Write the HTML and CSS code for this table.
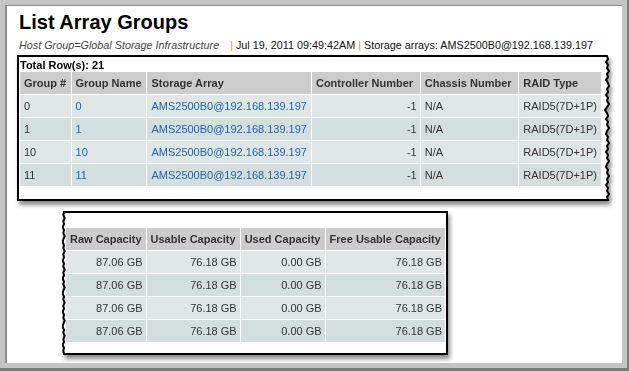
FILE: index.html
```html
<!DOCTYPE html>
<html lang="en">
<head>
    <meta charset="UTF-8">
    <meta name="viewport" content="width=device-width, initial-scale=1.0">
    <title>List Array Groups</title>
    <link rel="stylesheet" href="styles.css">
</head>
<body>

<div class="frame">
    <div class="page">
        <h1 class="title">List Array Groups</h1>
        <div class="meta">
            <span class="host">Host Group=Global Storage Infrastructure</span>
            <span class="sep">|</span> Jul 19, 2011 09:49:42AM <span class="sep">|</span> Storage arrays: AMS2500B0@192.168.139.197
        </div>

        <!-- first part of the report, cut off on the right -->
        <div class="sheet sheet-top">
            <div class="sheet-body">
                <div class="total">Total Row(s): 21</div>
                <table class="grid">
                    <tr>
                        <th class="c-num">Group #</th>
                        <th class="c-name">Group Name</th>
                        <th class="c-array">Storage Array</th>
                        <th class="c-ctrl">Controller Number</th>
                        <th class="c-chassis">Chassis Number</th>
                        <th class="c-raid">RAID Type</th>
                    </tr>
                    <tr>
                        <td>0</td>
                        <td><a href="#">0</a></td>
                        <td><a href="#">AMS2500B0@192.168.139.197</a></td>
                        <td class="num">-1</td>
                        <td>N/A</td>
                        <td>RAID5(7D+1P)</td>
                    </tr>
                    <tr>
                        <td>1</td>
                        <td><a href="#">1</a></td>
                        <td><a href="#">AMS2500B0@192.168.139.197</a></td>
                        <td class="num">-1</td>
                        <td>N/A</td>
                        <td>RAID5(7D+1P)</td>
                    </tr>
                    <tr>
                        <td>10</td>
                        <td><a href="#">10</a></td>
                        <td><a href="#">AMS2500B0@192.168.139.197</a></td>
                        <td class="num">-1</td>
                        <td>N/A</td>
                        <td>RAID5(7D+1P)</td>
                    </tr>
                    <tr>
                        <td>11</td>
                        <td><a href="#">11</a></td>
                        <td><a href="#">AMS2500B0@192.168.139.197</a></td>
                        <td class="num">-1</td>
                        <td>N/A</td>
                        <td>RAID5(7D+1P)</td>
                    </tr>
                </table>
            </div>
            <svg class="tear tear-right" viewBox="0 0 10 146" preserveAspectRatio="none">
                <path d="M0,1 L5,1 L6,4 L4,7 L6,10 L5,13 L7,16 L5,19 L6,22 L4,25 L6,28 L7,31 L5,34 L6,37 L4,40 L6,43 L5,46 L7,49 L5,52 L3,55 L5,58 L6,61 L4,64 L6,67 L5,70 L7,73 L5,76 L4,79 L6,82 L5,85 L7,88 L5,91 L6,94 L4,97 L6,100 L5,103 L7,106 L5,109 L4,112 L6,115 L5,118 L7,121 L5,124 L6,127 L4,130 L6,133 L5,136 L7,139 L5,142 L6,145 L0,145"/>
            </svg>
        </div>

        <!-- second part, cut off on the left -->
        <div class="sheet sheet-bottom">
            <svg class="tear tear-left" viewBox="0 0 6 143" preserveAspectRatio="none">
                <path d="M6,1 L3,1 L2,4 L4,7 L2,10 L3,13 L1,16 L3,19 L2,22 L4,25 L2,28 L1,31 L3,34 L2,37 L4,40 L2,43 L3,46 L1,49 L3,52 L2,55 L4,58 L2,61 L3,64 L1,67 L3,70 L2,73 L4,76 L2,79 L1,82 L3,85 L2,88 L4,91 L2,94 L3,97 L1,100 L3,103 L2,106 L4,109 L2,112 L1,115 L3,118 L2,121 L4,124 L2,127 L3,130 L1,133 L3,136 L2,139 L3,142 L6,142"/>
            </svg>
            <div class="sheet-body">
                <table class="grid">
                    <tr>
                        <th class="c-raw">Raw Capacity</th>
                        <th class="c-usable">Usable Capacity</th>
                        <th class="c-used">Used Capacity</th>
                        <th class="c-free">Free Usable Capacity</th>
                    </tr>
                    <tr>
                        <td class="num">87.06 GB</td>
                        <td class="num">76.18 GB</td>
                        <td class="num">0.00 GB</td>
                        <td class="num">76.18 GB</td>
                    </tr>
                    <tr>
                        <td class="num">87.06 GB</td>
                        <td class="num">76.18 GB</td>
                        <td class="num">0.00 GB</td>
                        <td class="num">76.18 GB</td>
                    </tr>
                    <tr>
                        <td class="num">87.06 GB</td>
                        <td class="num">76.18 GB</td>
                        <td class="num">0.00 GB</td>
                        <td class="num">76.18 GB</td>
                    </tr>
                    <tr>
                        <td class="num">87.06 GB</td>
                        <td class="num">76.18 GB</td>
                        <td class="num">0.00 GB</td>
                        <td class="num">76.18 GB</td>
                    </tr>
                </table>
            </div>
        </div>
    </div>
</div>

</body>
</html>
```

FILE: styles.css
```css
body {
    margin: 0;
    font-family: "Liberation Sans", Arial, sans-serif;
    background-color: #fff;
}
.frame {
    width: 629px;
    height: 371px;
    box-sizing: border-box;
    background-color: #c4c4c4;
    padding: 5px 0 0 5px;
    border-right: 2px solid #7a7a7a;
    border-bottom: 3px solid #7a7a7a;
}
.page {
    width: 617px;
    height: 358px;
    box-sizing: border-box;
    background-color: #fff;
    border-top: 1px solid #8a8a8a;
    border-left: 2px solid #8a8a8a;
    padding: 0 0 0 10px;
}
.title {
    margin: 4px 0 0 2px;
    font-size: 20px;
    line-height: 24px;
    font-weight: bold;
    color: #000;
}
.meta {
    margin: 4px 0 0 2px;
    font-size: 10.8px;
    line-height: 14px;
    color: #111;
    white-space: nowrap;
}
.host {
    font-style: italic;
    color: #444;
    margin-right: 8px;
}
.sep {
    color: #e39a2e;
}

/* torn paper pieces */
.sheet {
    display: flex;
    align-items: stretch;
    filter: drop-shadow(2px 4px 2px rgba(0, 0, 0, 0.45));
}
.sheet-body {
    background-color: #fff;
}
.tear path {
    fill: #fff;
    stroke: #000;
    stroke-width: 2;
    vector-effect: non-scaling-stroke;
}
.sheet-top {
    margin-top: 3px;
    width: 595px;
}
.sheet-top .sheet-body {
    border: 2px solid #000;
    border-right: none;
    padding: 0 0 12px 1px;
}
.tear-right {
    width: 10px;
    flex: none;
}
.sheet-bottom {
    margin: 10px 0 0 45px;
    width: 386px;
}
.sheet-bottom .sheet-body {
    border: 2px solid #000;
    border-left: none;
    padding: 15px 0 10px 0;
}
.tear-left {
    width: 4px;
    flex: none;
}
.total {
    font-size: 11px;
    font-weight: bold;
    line-height: 13px;
    padding-top: 2px;
    color: #000;
}

.grid {
    border-collapse: collapse;
    font-size: 11px;
    color: #333;
}
.grid th,
.grid td {
    border: 1px solid #fff;
    height: 22px;
    padding: 0 4px;
    text-align: left;
    white-space: nowrap;
}
.grid tr:first-child th {
    border-top: none;
}
.grid th {
    background-color: #cccccc;
    font-weight: bold;
    color: #333;
}
.grid tr:nth-child(even) td {
    background-color: #dfe6e6;
}
.grid tr:nth-child(odd) td {
    background-color: #d3dede;
}
.grid td.num {
    text-align: right;
    padding-right: 3px;
}
.grid a {
    color: #1f63a8;
    text-decoration: none;
}
.grid th:first-child,
.grid td:first-child {
    border-left: none;
}

.c-num { width: 43px; }
.c-name { width: 68px; }
.c-array { width: 152px; }
.c-ctrl { width: 103px; }
.c-chassis { width: 93px; }
.c-raid { width: 70px; }

.c-raw { width: 70px; }
.c-usable { width: 86px; }
.c-used { width: 77px; }
.c-free { width: 112px; }
```
